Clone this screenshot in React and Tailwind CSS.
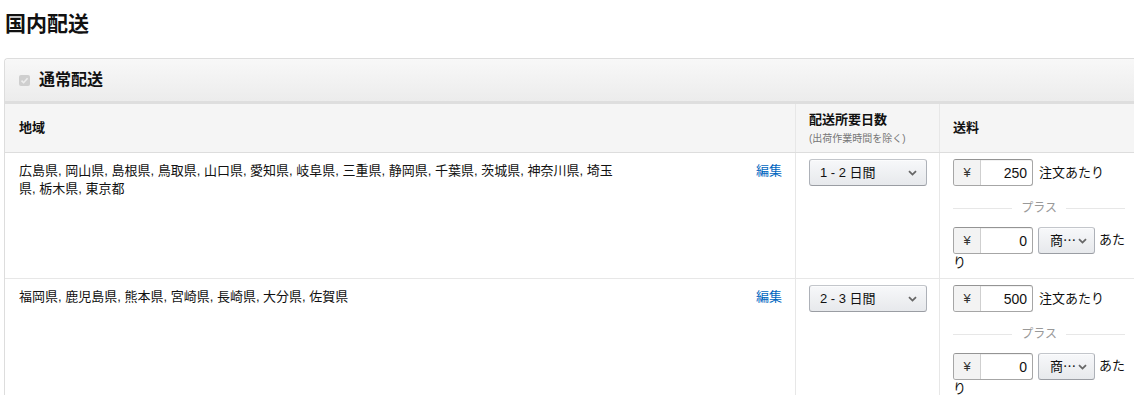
import React from 'react'

const rows = [
    {
        regions: '広島県, 岡山県, 島根県, 鳥取県, 山口県, 愛知県, 岐阜県, 三重県, 静岡県, 千葉県, 茨城県, 神奈川県, 埼玉県, 栃木県, 東京都',
        days: '1 - 2 日間',
        fee: 250,
        extra: 0,
    },
    {
        regions: '福岡県, 鹿児島県, 熊本県, 宮崎県, 長崎県, 大分県, 佐賀県',
        days: '2 - 3 日間',
        fee: 500,
        extra: 0,
    },
]

const Chevron = () => (
    <svg width="9" height="6" viewBox="0 0 9 6" className="shrink-0">
        <path d="M1 1.2 L4.5 4.6 L8 1.2" fill="none" stroke="#666" strokeWidth="1.8" />
    </svg>
)

const YenInput = ({ value }) => (
    <span className="inline-flex align-middle h-[27px] w-[80px] border border-[#a6a6a6] border-t-[#949494] rounded-[3px] overflow-hidden bg-white shadow-[inset_0_1px_0_rgba(0,0,0,0.05)] leading-none">
        <span className="w-[27px] shrink-0 flex items-center justify-center bg-[#f3f3f3] border-r border-[#cfcfcf] text-[13px] text-[#333]">¥</span>
        <span className="flex-1 flex items-center justify-end pr-[5px] text-[14px] text-[#111]">{value}</span>
    </span>
)

const SelectBox = ({ label, className, padding }) => (
    <span className={`inline-flex align-middle items-center justify-between h-[27px] border border-[#adb1b8] border-t-[#c3c6cb] border-b-[#9a9da3] rounded-[3px] bg-gradient-to-b from-[#f7f8fa] to-[#e7e9ec] shadow-[0_1px_0_rgba(255,255,255,0.6)_inset] text-[13px] text-[#111] leading-none ${className} ${padding}`}>
        <span className="whitespace-nowrap">{label}</span>
        <Chevron />
    </span>
)

const Row = ({ row }) => (
    <div className="grid grid-cols-[790px_144px_1fr] border-b border-[#e7e7e7]">
        <div className="flex justify-between pl-[14px] pr-[13px] pt-[9px]">
            <p className="w-[600px] text-[13px] leading-[18px] text-[#111]">{row.regions}</p>
            <a className="text-[13px] leading-[18px] text-[#0066c0] h-fit cursor-pointer">編集</a>
        </div>
        <div className="border-l border-[#e7e7e7] pl-[13px] pt-[6px]">
            <SelectBox label={row.days} className="w-[118px]" padding="pl-[10px] pr-[9px]" />
        </div>
        <div className="border-l border-[#e7e7e7] pl-[13px] pt-[6px] pb-[7px]">
            <div className="w-[172px]">
                <div className="flex items-center gap-[6px]">
                    <YenInput value={row.fee} />
                    <span className="text-[13px] text-[#111] whitespace-nowrap">注文あたり</span>
                </div>
                <div className="flex items-center mt-[14px] mb-[11px] h-[16px]">
                    <span className="flex-1 h-px bg-[#e7e7e7]" />
                    <span className="px-[9px] text-[12px] text-[#999]">プラス</span>
                    <span className="flex-1 h-px bg-[#e7e7e7]" />
                </div>
                <div className="text-[13px] leading-[17px] text-[#111]">
                    <YenInput value={row.extra} />
                    <SelectBox label="商⋯" className="w-[57px] ml-[5px] mr-[4px]" padding="pl-[11px] pr-[7px]" />
                    あたり
                </div>
            </div>
        </div>
    </div>
)

export default function App() {
    return (
        <div className="w-full min-h-screen overflow-hidden bg-white text-[#111] font-['Liberation_Sans','Noto_Sans_CJK_JP',sans-serif]">
            <h1 className="pl-[5px] pt-[10px] text-[21px] leading-[28px] font-bold">国内配送</h1>

            <div className="ml-[4px] mt-[20px] w-[1140px] border-l border-t border-[#dddddd] rounded-tl-[4px]">
                <div className="flex items-center h-[42px] pl-[14px] bg-gradient-to-b from-[#f8f8f8] to-[#ececec] border-b-[3px] border-[#dedede] box-content rounded-tl-[4px]">
                    <span className="w-[11px] h-[11px] rounded-[2px] bg-[#cfcfcf] flex items-center justify-center">
                        <svg width="9" height="9" viewBox="0 0 9 9">
                            <path d="M1.5 4.6 L3.6 6.7 L7.6 2.2" fill="none" stroke="#eeeeee" strokeWidth="1.6" />
                        </svg>
                    </span>
                    <span className="ml-[9px] text-[16px] font-bold">通常配送</span>
                </div>

                <div className="grid grid-cols-[790px_144px_1fr] h-[49px] bg-[#f5f5f5] border-b border-[#dddddd] text-[13px] font-bold">
                    <div className="flex items-center pl-[14px]">地域</div>
                    <div className="flex flex-col justify-center pl-[13px] border-l border-[#e7e7e7]">
                        <span className="leading-[20px]">配送所要日数</span>
                        <span className="text-[10px] leading-[17px] font-normal text-[#777]">(出荷作業時間を除く)</span>
                    </div>
                    <div className="flex items-center pl-[13px] border-l border-[#e7e7e7]">送料</div>
                </div>

                {rows.map((row, i) => (
                    <Row key={i} row={row} />
                ))}
            </div>
        </div>
    )
}
